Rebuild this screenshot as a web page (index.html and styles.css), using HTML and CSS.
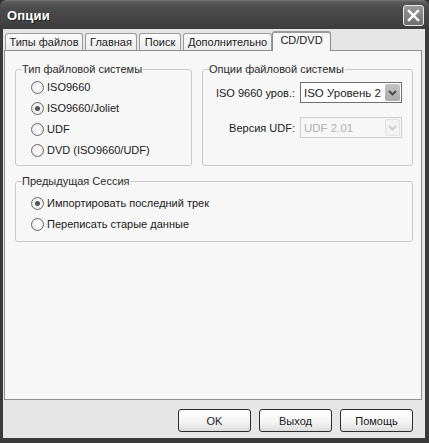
FILE: index.html
```html
<!DOCTYPE html>
<html lang="ru">
<head>
<meta charset="utf-8">
<title>Опции</title>
<link rel="stylesheet" href="styles.css">
</head>
<body>
<div class="window">
  <div class="titlebar">
    <span class="title">Опции</span>
    <div class="close">
      <svg width="13" height="13" viewBox="0 0 13 13"><path d="M2 2 L11 11 M11 2 L2 11" stroke="#fff" stroke-width="2.4" stroke-linecap="square"/></svg>
    </div>
  </div>
  <div class="client">
    <div class="tabs">
      <div class="tab t1">Типы файлов</div>
      <div class="tab t2">Главная</div>
      <div class="tab t3">Поиск</div>
      <div class="tab t4">Дополнительно</div>
      <div class="tab active t5">CD/DVD</div>
    </div>
    <div class="panel">
      <div class="row">
        <fieldset class="group fs-type">
          <legend>Тип файловой системы</legend>
          <div class="radios">
            <div class="radio"><span class="dot"></span>ISO9660</div>
            <div class="radio"><span class="dot checked"></span>ISO9660/Joliet</div>
            <div class="radio"><span class="dot"></span>UDF</div>
            <div class="radio"><span class="dot"></span>DVD (ISO9660/UDF)</div>
          </div>
        </fieldset>
        <fieldset class="group fs-opts">
          <legend>Опции файловой системы</legend>
          <div class="field">
            <span class="label">ISO 9660 уров.:</span>
            <div class="combo">
              <span class="value">ISO Уровень 2</span>
              <span class="arrow"><svg width="9" height="6" viewBox="0 0 9 6"><path d="M1 1 L4.5 4.5 L8 1" fill="none" stroke="#444" stroke-width="1.8"/></svg></span>
            </div>
          </div>
          <div class="field">
            <span class="label">Версия UDF:</span>
            <div class="combo disabled">
              <span class="value">UDF 2.01</span>
              <span class="arrow"><svg width="9" height="6" viewBox="0 0 9 6"><path d="M1 1 L4.5 4.5 L8 1" fill="none" stroke="#ccc" stroke-width="1.8"/></svg></span>
            </div>
          </div>
        </fieldset>
      </div>
      <fieldset class="group fs-session">
        <legend>Предыдущая Сессия</legend>
        <div class="radios">
          <div class="radio"><span class="dot checked"></span>Импортировать последний трек</div>
          <div class="radio"><span class="dot"></span>Переписать старые данные</div>
        </div>
      </fieldset>
    </div>
    <div class="footer">
      <div class="btn">OK</div>
      <div class="btn">Выход</div>
      <div class="btn">Помощь</div>
    </div>
  </div>
</div>
</body>
</html>
```
FILE: styles.css
```css
html, body {
  margin: 0;
  padding: 0;
  background: #2e2e2e;
}
body {
  font-family: "Liberation Sans", Arial, sans-serif;
  font-size: 11px;
  color: #1a1a1a;
}
.window {
  width: 429px;
  height: 443px;
  box-sizing: border-box;
  background: #3a3a3a;
  display: flex;
  flex-direction: column;
  border-radius: 6px 6px 0 0;
  overflow: hidden;
}
.titlebar {
  height: 29px;
  flex: none;
  display: flex;
  align-items: center;
  justify-content: space-between;
  padding: 0 5px 0 7px;
  background: linear-gradient(#7a7a7a 0, #5a5a5a 2px, #4c4c4c 8px, #444 20px, #3c3c3c 29px);
}
.title {
  color: #fff;
  font-weight: bold;
  font-size: 13px;
  letter-spacing: 0.2px;
  text-shadow: 1px 1px 0 #222;
  padding-top: 2px;
}
.close {
  width: 19px;
  height: 19px;
  border: 1px solid #e8e8e8;
  border-radius: 3px;
  background: linear-gradient(#9a9a9a, #6e6e6e);
  display: flex;
  align-items: center;
  justify-content: center;
  margin-top: 2px;
}
.client {
  flex: 1;
  margin: 0 4px 5px 3px;
  background: #e6e6e6;
  padding: 2px 3px 0 1px;
  display: flex;
  flex-direction: column;
}
.tabs {
  display: flex;
  align-items: flex-end;
  height: 19px;
  padding-left: 1px;
  position: relative;
  z-index: 1;
}
.tab {
  height: 17px;
  line-height: 17px;
  box-sizing: border-box;
  border: 1px solid #9a9a9a;
  border-bottom: none;
  border-radius: 3px 3px 0 0;
  background: linear-gradient(#fcfcfc, #ececec);
  text-align: center;
  margin-right: 2px;
  color: #1a1a1a;
}
.t1 { width: 78px; }
.t2 { width: 52px; }
.t3 { width: 42px; }
.t4 { width: 89px; margin-right: 0; }
.t5 { width: 59px; }
.tab.active {
  height: 20px;
  line-height: 15px;
  background: #f7f7f7;
  border-color: #8a8a8a;
  margin-bottom: -1px;
  border-top: 2px solid #9a9a9a;
  padding-bottom: 3px;
}
.panel {
  height: 350px;
  box-sizing: border-box;
  border: 1px solid #8f8f8f;
  background: #f7f7f7;
  padding: 12px 8px 0 10px;
  display: flex;
  flex-direction: column;
  gap: 9px;
}
.row {
  display: flex;
  gap: 10px;
}
.group {
  margin: 0;
  border: 1px solid #c9c9c9;
  border-radius: 3px;
  padding: 0;
  min-width: 0;
}
.group legend {
  padding: 0 1px 0 0;
  margin-left: 6px;
  line-height: 13px;
  color: #2a2a2a;
}
.fs-type {
  width: 177px;
  box-sizing: border-box;
  height: 103px;
}
.fs-opts {
  flex: 1;
  box-sizing: border-box;
  height: 103px;
}
.fs-session {
  height: 67px;
  box-sizing: border-box;
}
.radios {
  display: flex;
  flex-direction: column;
  padding: 4px 0 0 15px;
  gap: 7px;
}
.fs-session .radios {
  padding-top: 8px;
}
.radio {
  display: flex;
  align-items: center;
  height: 14px;
  gap: 3px;
}
.dot {
  width: 11px;
  height: 11px;
  border: 1px solid #6a6a6a;
  border-radius: 50%;
  background: radial-gradient(circle at 50% 50%, #fff 0, #f2f2f2 55%, #d8d8d8 100%);
  display: inline-flex;
  align-items: center;
  justify-content: center;
}
.dot.checked::after {
  content: "";
  width: 5px;
  height: 5px;
  border-radius: 50%;
  background: #555;
}
.field {
  display: flex;
  align-items: center;
  justify-content: flex-end;
  padding-right: 10px;
  gap: 5px;
  height: 21px;
}
.fs-opts .field:first-of-type {
  margin-top: 6px;
}
.fs-opts .field + .field {
  margin-top: 14px;
}
.combo {
  width: 102px;
  height: 21px;
  box-sizing: border-box;
  border: 1px solid #6f6f6f;
  background: #fff;
  display: flex;
  align-items: center;
  justify-content: space-between;
  padding: 0 1px 0 3px;
}
.value {
  font-size: 11.5px;
}
.arrow {
  width: 15px;
  height: 17px;
  background: linear-gradient(#c4c4c4, #a9a9a9);
  border-radius: 2px;
  display: flex;
  align-items: center;
  justify-content: center;
}
.combo.disabled {
  border-color: #cfcfcf;
  background: #f7f7f7;
  color: #b0b0b0;
}
.combo.disabled .arrow {
  background: #f2f2f2;
  border: 1px solid #e2e2e2;
  box-sizing: border-box;
}
.footer {
  flex: 1;
  display: flex;
  justify-content: flex-end;
  align-items: flex-start;
  padding: 9px 9px 0 0;
  gap: 8px;
}
.btn {
  width: 73px;
  height: 23px;
  box-sizing: border-box;
  border: 1px solid #2c2c2c;
  border-radius: 3px;
  background: linear-gradient(#ffffff, #f3f3f3 60%, #dcdcdc);
  display: flex;
  align-items: center;
  justify-content: center;
}
```
